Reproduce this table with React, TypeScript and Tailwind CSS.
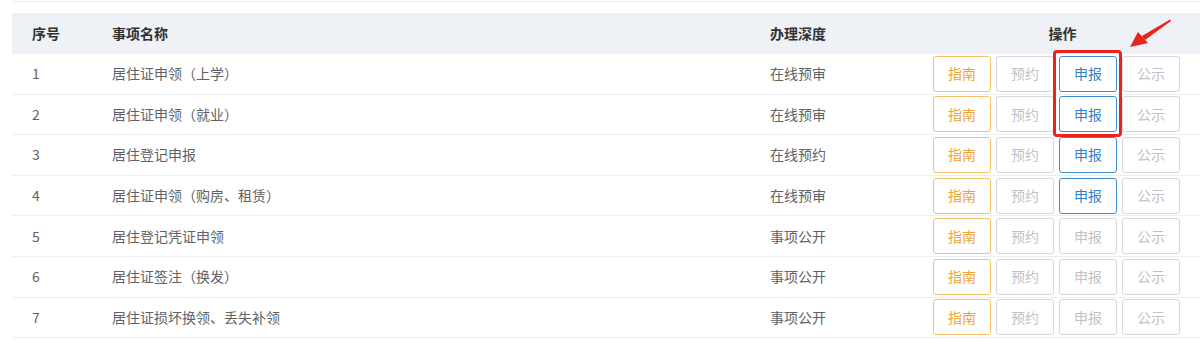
const rows = [
  { id: 1, name: "居住证申领（上学）", depth: "在线预审", apply: true },
  { id: 2, name: "居住证申领（就业）", depth: "在线预审", apply: true },
  { id: 3, name: "居住登记申报", depth: "在线预约", apply: true },
  { id: 4, name: "居住证申领（购房、租赁）", depth: "在线预审", apply: true },
  { id: 5, name: "居住登记凭证申领", depth: "事项公开", apply: false },
  { id: 6, name: "居住证签注（换发）", depth: "事项公开", apply: false },
  { id: 7, name: "居住证损坏换领、丢失补领", depth: "事项公开", apply: false },
];

const GRID = "grid grid-cols-[80px_658px_175px_1fr]";

function Btn({ label, tone }: { label: string; tone: "orange" | "blue" | "grey" }) {
  const cls =
    tone === "orange"
      ? "border-[#f3c567] text-[#eba43a]"
      : tone === "blue"
      ? "border-[#3f8cd6] text-[#2f7fc8]"
      : "border-[#d6d8dc] text-[#bfc2c7]";
  return (
    <button
      className={`flex h-[36px] w-[58px] items-center justify-center rounded-[3px] border bg-white text-[14px] ${cls}`}
    >
      {label}
    </button>
  );
}

export default function App() {
  return (
    <div
      className="relative h-[353px] w-[1200px] overflow-hidden bg-white text-[14px]"
      style={{ fontFamily: '"Noto Sans CJK SC", "Noto Sans", sans-serif' }}
    >
      <div className="ml-[12px] h-[2px] border-b border-[#ebeef5]" />
      <div className="ml-[12px] mt-[11px]">
        {/* 表头 */}
        <div className={`${GRID} h-[41px] items-center bg-[#eef1f6] font-bold text-[#303133]`}>
          <div className="pl-[20px]">序号</div>
          <div className="pl-[20px]">事项名称</div>
          <div className="pl-[20px]">办理深度</div>
          <div className="text-center">操作</div>
        </div>

        {/* 数据行 */}
        {rows.map((r) => (
          <div
            key={r.id}
            className={`${GRID} h-[40.6px] items-center border-b border-[#ebeef5] text-[#606266]`}
          >
            <div className="pl-[20px]">{r.id}</div>
            <div className="pl-[20px]">{r.name}</div>
            <div className="pl-[20px]">{r.depth}</div>
            <div className="flex gap-[5px] pl-[8px]">
              <Btn label="指南" tone="orange" />
              <Btn label="预约" tone="grey" />
              <Btn label="申报" tone={r.apply ? "blue" : "grey"} />
              <Btn label="公示" tone="grey" />
            </div>
          </div>
        ))}
      </div>

      {/* 红色标注框 */}
      <div className="absolute left-[1053px] top-[50px] h-[87px] w-[69px] rounded-[4px] border-[3px] border-[#e8241c]" />

      {/* 红色箭头 */}
      <svg className="absolute left-[1126px] top-[18px]" width="48" height="34" viewBox="0 0 48 34">
        <path d="M45 3 L44 1.5 L16 18 L19 22 Z" fill="#e8241c" />
        <path d="M4 29 L12 14 L22 25 Z" fill="#e8241c" />
      </svg>
    </div>
  );
}
